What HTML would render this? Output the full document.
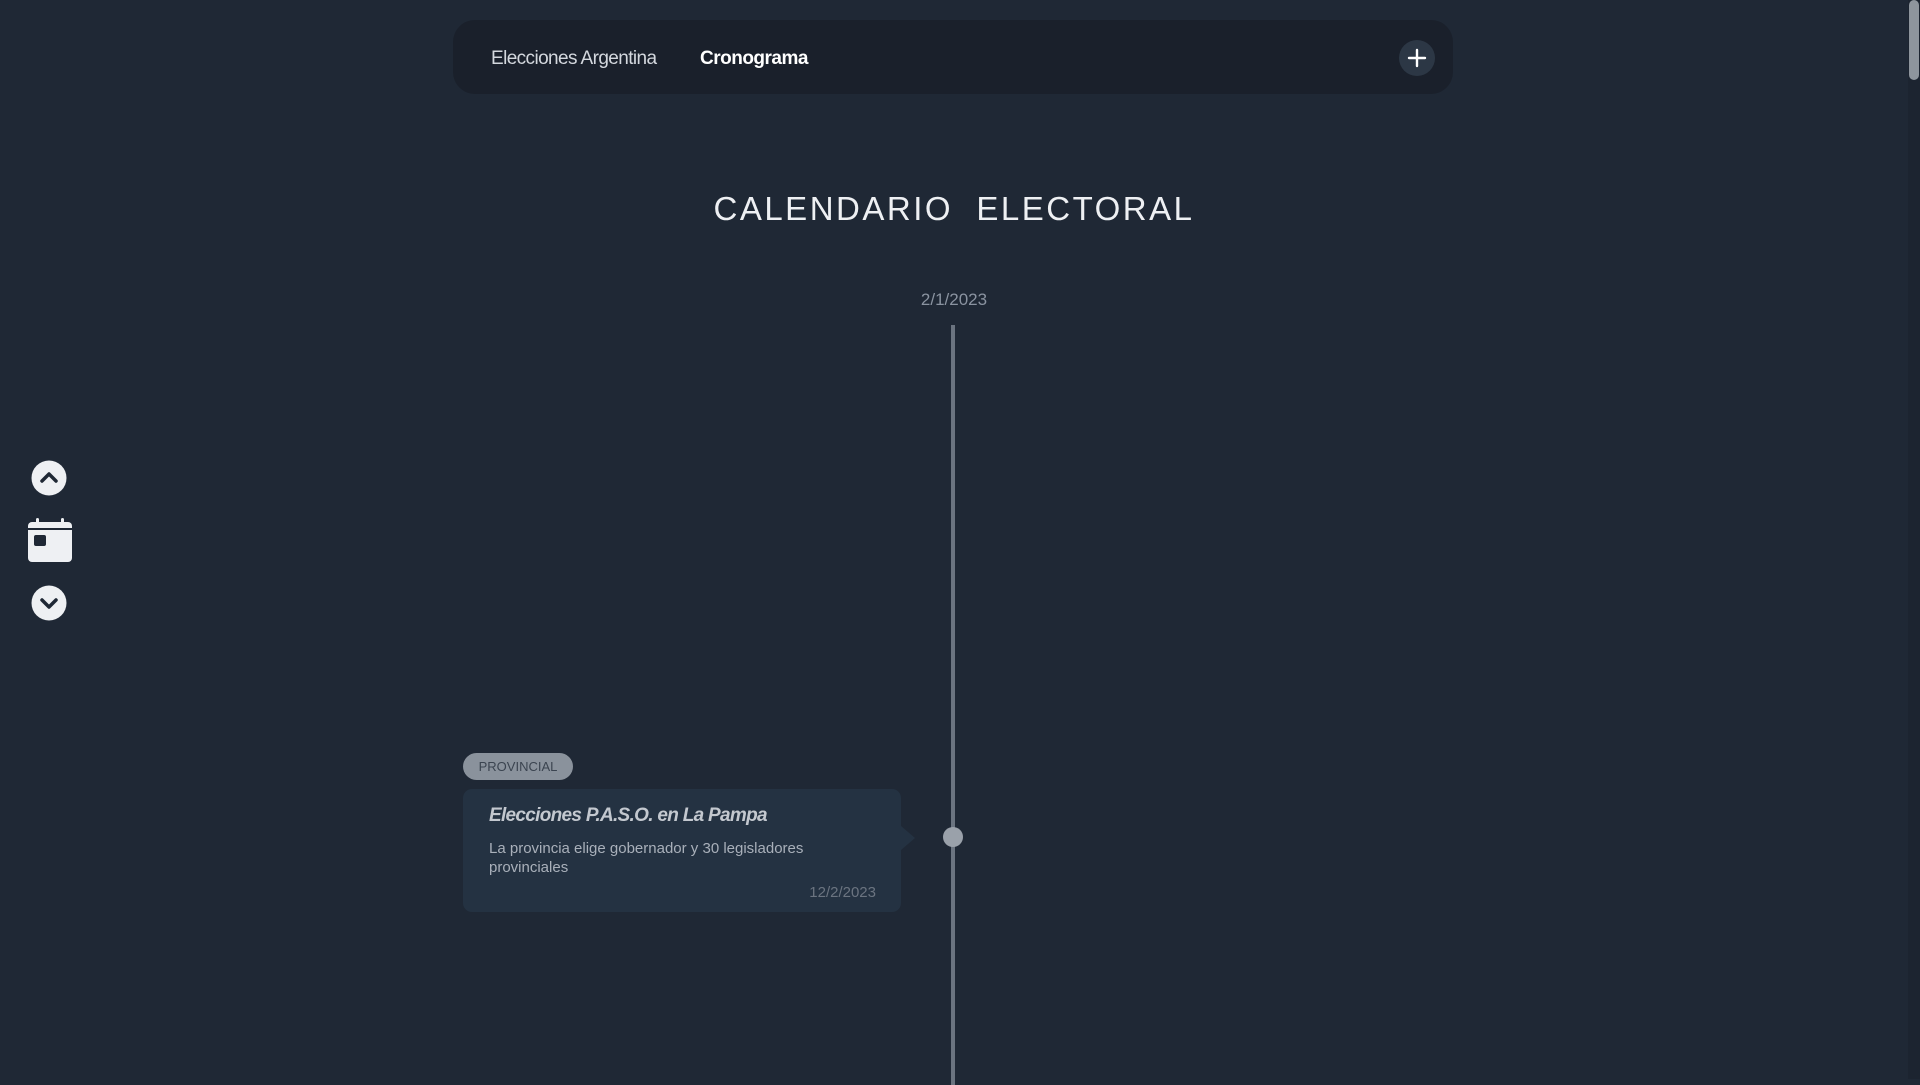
<!DOCTYPE html>
<html><head><meta charset="utf-8"><style>
html,body{margin:0;padding:0;width:1920px;height:1079px;overflow:hidden;background:#1f2835;font-family:"Liberation Sans",sans-serif;}
.nav{position:absolute;left:453px;top:20px;width:1000px;height:74px;background:#1a202b;border-radius:22px;}
.nav .a{position:absolute;left:38px;top:28px;font-size:19px;color:#d4d8de;letter-spacing:-0.6px}
.nav .b{position:absolute;left:247px;top:28px;font-size:19px;color:#fff;font-weight:bold;letter-spacing:-0.5px}
.plus{position:absolute;left:946px;top:20px;width:36px;height:36px;border-radius:50%;background:#2c3745;}
.title{position:absolute;left:0;width:1908px;text-align:center;top:190px;font-size:33px;color:#eef0f3;letter-spacing:2.5px;}
.date{position:absolute;left:0;width:1908px;text-align:center;top:290px;font-size:17px;color:#8a93a0;}
.line{position:absolute;left:951px;top:325px;width:4px;height:760px;background:#6b7480;}
.dot{position:absolute;left:943px;top:827px;width:20px;height:20px;border-radius:50%;background:#9aa1aa;}
.badge{position:absolute;left:463px;top:753px;width:110px;height:27px;border-radius:14px;background:#8a929c;color:#3b4450;font-size:13px;text-align:center;line-height:27px;}
.card{position:absolute;left:463px;top:789px;width:438px;height:123px;background:#243242;border-radius:9px;}
.card:after{content:"";position:absolute;right:-14px;top:37px;border:12px solid transparent;border-left:14px solid #243242;border-right:0;}
.card .t{position:absolute;left:26px;top:16px;font-size:19px;font-weight:bold;font-style:italic;color:#c3c8cf;letter-spacing:-0.7px}
.card .d{position:absolute;left:26px;top:50px;width:360px;font-size:15px;line-height:19px;color:#a9b0ba;}
.card .dt{position:absolute;right:25px;top:95px;font-size:15px;color:#6b7480;}
.scroll{position:absolute;right:0;top:0;width:12px;height:1079px;background:#1c2430}
.thumb{position:absolute;right:1px;top:0;width:10px;height:80px;background:#8e959d;border-radius:5px}
</style></head><body>
<div class="nav"><span class="a">Elecciones Argentina</span><span class="b">Cronograma</span>
<div class="plus"><svg width="36" height="36"><path d="M18 10v16M10 18h16" stroke="#fff" stroke-width="2.4" stroke-linecap="round"/></svg></div></div>
<div class="title">CALENDARIO&nbsp; ELECTORAL</div>
<div class="date">2/1/2023</div>
<div class="line"></div>
<div class="dot"></div>
<div class="badge">PROVINCIAL</div>
<div class="card"><div class="t">Elecciones P.A.S.O. en La Pampa</div>
<div class="d">La provincia elige gobernador y 30 legisladores provinciales</div>
<div class="dt">12/2/2023</div></div>
<svg style="position:absolute;left:31px;top:460px" width="36" height="36"><circle cx="18" cy="18" r="17.5" fill="#eef0f3"/><path d="M11 21l7-7 7 7" stroke="#1f2835" stroke-width="3.5" fill="none" stroke-linecap="round" stroke-linejoin="round"/></svg>
<svg style="position:absolute;left:27px;top:518px" width="46" height="46"><rect x="1" y="4" width="44" height="40" rx="4" fill="#eef0f3"/><rect x="1" y="10" width="44" height="2" fill="#1f2835"/><rect x="9" y="0" width="3" height="8" rx="1.5" fill="#eef0f3"/><rect x="34" y="0" width="3" height="8" rx="1.5" fill="#eef0f3"/><rect x="7" y="17" width="12" height="11" rx="2" fill="#1f2835"/></svg>
<svg style="position:absolute;left:31px;top:585px" width="36" height="36"><circle cx="18" cy="18" r="17.5" fill="#eef0f3"/><path d="M11 15l7 7 7-7" stroke="#1f2835" stroke-width="3.5" fill="none" stroke-linecap="round" stroke-linejoin="round"/></svg>
<div class="scroll"><div class="thumb"></div></div>
</body></html>
